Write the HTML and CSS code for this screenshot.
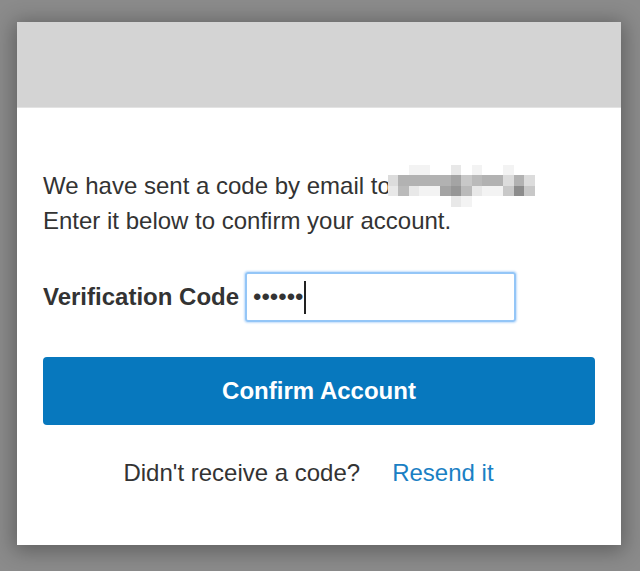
FILE: index.html
```html
<!DOCTYPE html>
<html lang="en">
<head>
<meta charset="utf-8">
<title>Confirm Account</title>
<link rel="stylesheet" href="styles.css">
</head>
<body>
<div class="page">
  <div class="card">
    <div class="header"></div>
    <div class="content">
      <p class="msg">We have sent a code by email to<span class="blur"><span class="grid">
<span class="s0"></span><span class="s0"></span><span class="s1"></span><span class="s1"></span><span class="s0"></span><span class="s0"></span><span class="s2"></span><span class="s0"></span><span class="s1"></span><span class="s0"></span><span class="s0"></span><span class="s1"></span><span class="s0"></span><span class="s0"></span>
<span class="s3"></span><span class="s6"></span><span class="s6"></span><span class="s6"></span><span class="s6"></span><span class="s6"></span><span class="s7"></span><span class="s4"></span><span class="s5"></span><span class="s6"></span><span class="s6"></span><span class="s3"></span><span class="s6"></span><span class="s3"></span>
<span class="s2"></span><span class="s5"></span><span class="s2"></span><span class="s1"></span><span class="s1"></span><span class="s7"></span><span class="s8"></span><span class="s5"></span><span class="s2"></span><span class="s1"></span><span class="s1"></span><span class="s4"></span><span class="s9"></span><span class="s4"></span>
<span class="s0"></span><span class="s0"></span><span class="s0"></span><span class="s0"></span><span class="s0"></span><span class="s0"></span><span class="s2"></span><span class="s1"></span><span class="s0"></span><span class="s0"></span><span class="s0"></span><span class="s0"></span><span class="s0"></span><span class="s0"></span>
</span></span><br>Enter it below to confirm your account.</p>
      <div class="field">
        <label class="label">Verification Code</label>
        <div class="input"><span class="dots">••••••</span><span class="caret"></span></div>
      </div>
      <button class="btn">Confirm Account</button>
      <div class="resend">
        <span class="q">Didn't receive a code?</span>
        <a class="link">Resend it</a>
      </div>
    </div>
  </div>
</div>
</body>
</html>
```
FILE: styles.css
```css
html, body {
  margin: 0;
  padding: 0;
}
body {
  background: #8b8b8b;
  width: 640px;
  height: 571px;
  overflow: hidden;
  font-family: "Liberation Sans", Arial, sans-serif;
  color: #333;
}
.page {
  padding: 22px 19px 0 17px;
}
.card {
  background: #fff;
  height: 523px;
  box-shadow: 0 3px 20px 3px rgba(0, 0, 0, 0.32);
}
.header {
  height: 85px;
  background: #d4d4d4;
  border-bottom: 1px solid #e3e3e3;
}
.content {
  padding: 60px 26px 0 26px;
}
.msg {
  margin: 0;
  font-size: 24px;
  line-height: 35px;
}
.blur {
  display: inline-block;
  height: 42px;
  margin: -23px 0 -19px -3px;
  vertical-align: middle;
}
.grid {
  display: grid;
  grid-template-columns: repeat(14, 10.5px);
  grid-template-rows: repeat(4, 10.5px);
}
.s0 { background: #ffffff; }
.s1 { background: #f3f3f3; }
.s2 { background: #e8e8e8; }
.s3 { background: #dcdcdc; }
.s4 { background: #c8c8c8; }
.s5 { background: #bababa; }
.s6 { background: #b2b2b2; }
.s7 { background: #a4a4a4; }
.s8 { background: #969696; }
.s9 { background: #8c8c8c; }
.field {
  display: flex;
  align-items: center;
  margin-top: 34px;
}
.label {
  font-size: 24px;
  font-weight: bold;
  margin-right: 6px;
  margin-left: 0;
}
.input {
  box-sizing: border-box;
  width: 271px;
  height: 50px;
  border: 2px solid #94c6f7;
  border-radius: 3px;
  box-shadow: 0 0 2px 1px #c2defb;
  display: flex;
  align-items: center;
  padding-left: 6px;
}
.dots {
  font-size: 24px;
  color: #333;
}
.caret {
  display: inline-block;
  width: 1.5px;
  height: 33px;
  background: #222;
  margin-left: 1px;
}
.btn {
  display: block;
  box-sizing: border-box;
  width: 100%;
  height: 68px;
  margin: 35px 0 0 0;
  border: none;
  border-radius: 4px;
  background: #0778be;
  color: #fff;
  font-family: "Liberation Sans", Arial, sans-serif;
  font-size: 24px;
  font-weight: bold;
  padding: 0;
}
.resend {
  display: flex;
  justify-content: center;
  gap: 32px;
  margin-top: 31px;
  padding-right: 21px;
  font-size: 24px;
  line-height: 33px;
}
.link {
  color: #1a80c4;
  text-decoration: none;
}
```
